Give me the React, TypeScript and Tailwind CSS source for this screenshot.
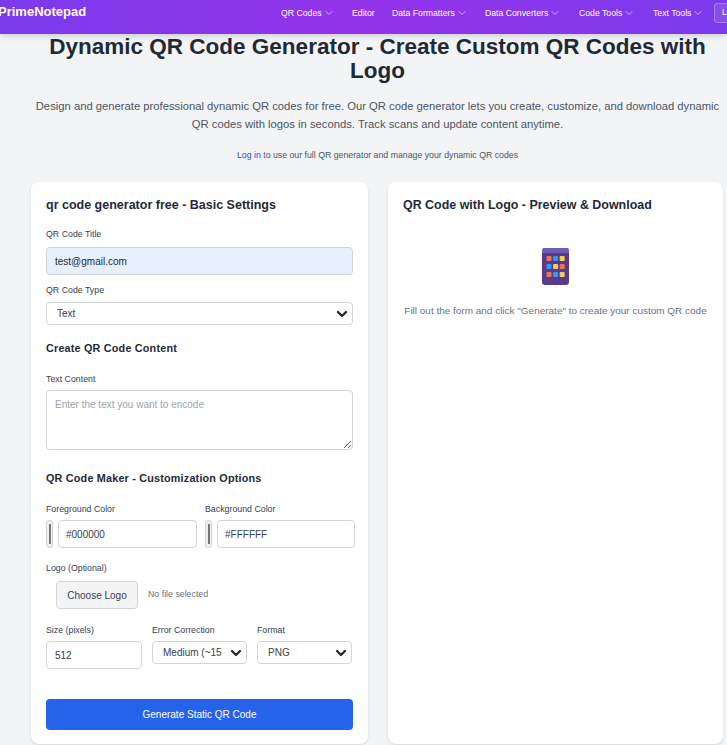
import { ChevronDown } from 'lucide-react';

const navItems = [
  { label: 'QR Codes', menu: true, width: 'w-[71px]' },
  { label: 'Editor', menu: false, width: 'w-[40px]' },
  { label: 'Data Formatters', menu: true, width: 'w-[93px]' },
  { label: 'Data Converters', menu: true, width: 'w-[94px]' },
  { label: 'Code Tools', menu: true, width: 'w-[74px]' },
  { label: 'Text Tools', menu: true, width: 'w-[61px]' },
];

function Label({ children }: { children: React.ReactNode }) {
  return <label className="block pb-[2px] text-[8.8px] leading-[10px] text-[#374151]">{children}</label>;
}

function SelectBox({ value, className }: { value: string; className: string }) {
  return (
    <div className={`relative ${className}`}>
      <select
        defaultValue={value}
        className="block h-full w-full appearance-none rounded-[4px] border border-[#d1d5db] bg-white pl-[10px] pr-[24px] text-[10px] text-[#374151] outline-none"
      >
        <option>{value}</option>
      </select>
      <ChevronDown className="pointer-events-none absolute right-[3px] top-1/2 h-[16px] w-[16px] -translate-y-1/2 text-[#1f2937]" strokeWidth={3.5} />
    </div>
  );
}

function ColorField({ value }: { value: string }) {
  return (
    <div className="flex items-stretch gap-[5px]">
      <div className="flex h-[28px] w-[7px] items-center justify-center rounded-[3px] border border-[#d1d5db] bg-[#efefef]">
        <div className="h-[20px] w-[2px] bg-[#777777]" />
      </div>
      <input
        readOnly
        value={value}
        className="h-[28px] min-w-0 flex-1 rounded-[4px] border border-[#d1d5db] bg-white px-[7px] text-[10px] text-[#374151] outline-none"
      />
    </div>
  );
}

function TabletIcon() {
  const colors = ['#e8794f', '#2f9bf0', '#f2cf5b', '#2f9bf0', '#f2cf5b', '#e8794f', '#e8794f', '#2f9bf0', '#f2cf5b'];
  return (
    <svg width="27" height="37" viewBox="0 0 27 37" className="block">
      <rect width="27" height="37" rx="3" fill="#5b3a8c" />
      <path d="M0 3a3 3 0 0 1 3-3h21a3 3 0 0 1 3 3v2H0z" fill="#6a5fb0" />
      {colors.map((c, i) => (
        <rect key={i} x={4.5 + (i % 3) * 6.6} y={8 + Math.floor(i / 3) * 8} width="5" height="5" rx="1" fill={c} />
      ))}
    </svg>
  );
}

export default function App() {
  return (
    <div className="h-[745px] w-[727px] overflow-hidden bg-[#f3f4f6] font-['Liberation_Sans',Arial,sans-serif] text-[#1f2937]">
      <header className="relative z-10 flex h-[34px] items-start justify-between bg-gradient-to-r from-[#7c3aed] via-[#9333ea] to-[#7c3aed] pt-[3px] shadow-md">
        <span className="-ml-[2px] text-[13px] font-bold leading-[17px] text-white">PrimeNotepad</span>
        <nav className="flex items-center">
          {navItems.map((item) => (
            <span key={item.label} className={`flex items-center gap-[1px] whitespace-nowrap pt-[1px] text-[8.7px] text-white ${item.width}`}>
              {item.label}
              {item.menu && <ChevronDown className="h-[12px] w-[12px] opacity-80" strokeWidth={1.5} />}
            </span>
          ))}
          <span className="-mr-[14px] flex h-[20px] w-[27px] items-center rounded-[4px] border border-white/30 bg-white/10 pl-[7px] text-[8.7px] text-white">
            Lo
          </span>
        </nav>
      </header>

      <main className="ml-[31px] w-[693px]">
        <h1 className="mt-[1px] text-center text-[22.5px] font-bold leading-[24px] text-[#1f2937]">
          Dynamic QR Code Generator - Create Custom QR Codes with Logo
        </h1>
        <p className="mt-[14px] -mx-[2px] text-center text-[11.25px] leading-[18px] text-[#4b5563]">
          Design and generate professional dynamic QR codes for free. Our QR code generator lets you create, customize, and download dynamic QR codes with logos in seconds. Track scans and update content anytime.
        </p>
        <p className="mt-[16px] text-center text-[8.75px] leading-[12px] text-[#4b5563]">
          <a className="text-[#1d4ed8]">Log in</a> to use our full QR generator and manage your dynamic QR codes
        </p>

        <div className="mt-[21px] grid grid-cols-[337px_335px] gap-x-[20px]">
          <section className="h-[562px] rounded-[8px] bg-white px-[15px] pt-[15px] shadow-sm">
            <h2 className="text-[12.5px] font-bold leading-[16px] text-[#1f2937]">qr code generator free - Basic Settings</h2>

            <div className="mt-[16px]"><Label>QR Code Title</Label></div>
            <input
              readOnly
              value="test@gmail.com"
              className="mt-[6px] block h-[28px] w-[307px] rounded-[4px] border border-[#d1d5db] bg-[#e8f0fe] px-[8px] text-[10px] text-[#1f2937] outline-none"
            />

            <div className="mt-[10px]"><Label>QR Code Type</Label></div>
            <SelectBox value="Text" className="mt-[5px] h-[23px] w-[307px]" />

            <h3 className="mt-[16px] text-[10.8px] font-bold leading-[14px] tracking-[0.2px] text-[#1f2937]">Create QR Code Content</h3>

            <div className="mt-[19px]"><Label>Text Content</Label></div>
            <textarea
              readOnly
              placeholder="Enter the text you want to encode"
              className="mt-[4px] block h-[60px] w-[307px] rounded-[4px] border border-[#d1d5db] bg-white px-[8px] py-[7px] text-[10px] leading-[13px] text-[#374151] outline-none placeholder:text-[#9ca3af]"
            />

            <h3 className="mt-[21px] text-[10.8px] font-bold leading-[14px] tracking-[0.2px] text-[#1f2937]">QR Code Maker - Customization Options</h3>

            <div className="mt-[19px] grid grid-cols-[151px_150px] gap-x-[8px] gap-y-[4px]">
              <Label>Foreground Color</Label>
              <Label>Background Color</Label>
              <ColorField value="#000000" />
              <ColorField value="#FFFFFF" />
            </div>

            <div className="mt-[15px]"><Label>Logo (Optional)</Label></div>
            <div className="ml-[10px] mt-[6px] flex items-center gap-[10px]">
              <button className="h-[28px] w-[82px] rounded-[4px] border border-[#d1d5db] bg-[#f3f4f6] text-[10px] text-[#374151]">Choose Logo</button>
              <span className="text-[8.8px] text-[#6b7280]">No file selected</span>
            </div>

            <div className="mt-[16px] grid grid-cols-[96px_95px_95px] gap-x-[10px]">
              <div>
                <Label>Size (pixels)</Label>
                <input
                  readOnly
                  value="512"
                  className="mt-[4px] block h-[28px] w-full rounded-[4px] border border-[#d1d5db] bg-white px-[8px] text-[10px] text-[#374151] outline-none"
                />
              </div>
              <div>
                <Label>Error Correction</Label>
                <SelectBox value="Medium (~15%)" className="mt-[4px] h-[23px]" />
              </div>
              <div>
                <Label>Format</Label>
                <SelectBox value="PNG" className="mt-[4px] h-[23px]" />
              </div>
            </div>

            <button className="mt-[30px] block h-[31px] w-[307px] rounded-[4px] bg-[#2563eb] text-[10px] text-white">Generate Static QR Code</button>
          </section>

          <section className="h-[562px] rounded-[8px] bg-white px-[15px] pt-[15px] shadow-sm">
            <h2 className="text-[12.45px] font-bold leading-[16px] text-[#1f2937]">QR Code with Logo - Preview &amp; Download</h2>
            <div className="mt-[35px] flex flex-col items-center">
              <TabletIcon />
              <p className="mt-[19px] whitespace-nowrap text-[9.97px] leading-[13px] text-[#6b7280]">
                Fill out the form and click &quot;Generate&quot; to create your custom QR code
              </p>
            </div>
          </section>
        </div>
      </main>
    </div>
  );
}
